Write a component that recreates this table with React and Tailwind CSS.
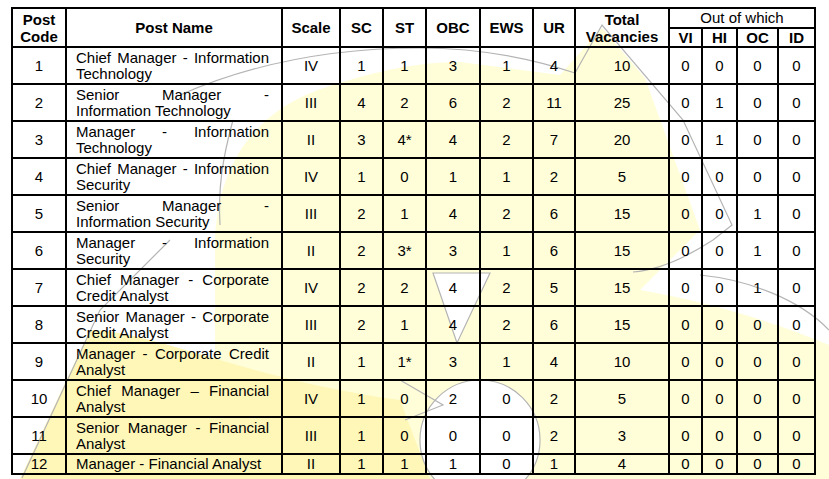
import React from 'react';

const rows = [
  ['1', 'Chief Manager - Information Technology', 'IV', '1', '1', '3', '1', '4', '10', '0', '0', '0', '0'],
  ['2', 'Senior Manager - Information Technology', 'III', '4', '2', '6', '2', '11', '25', '0', '1', '0', '0'],
  ['3', 'Manager - Information Technology', 'II', '3', '4*', '4', '2', '7', '20', '0', '1', '0', '0'],
  ['4', 'Chief Manager - Information Security', 'IV', '1', '0', '1', '1', '2', '5', '0', '0', '0', '0'],
  ['5', 'Senior Manager - Information Security', 'III', '2', '1', '4', '2', '6', '15', '0', '0', '1', '0'],
  ['6', 'Manager - Information Security', 'II', '2', '3*', '3', '1', '6', '15', '0', '0', '1', '0'],
  ['7', 'Chief Manager - Corporate Credit Analyst', 'IV', '2', '2', '4', '2', '5', '15', '0', '0', '1', '0'],
  ['8', 'Senior Manager - Corporate Credit Analyst', 'III', '2', '1', '4', '2', '6', '15', '0', '0', '0', '0'],
  ['9', 'Manager - Corporate Credit Analyst', 'II', '1', '1*', '3', '1', '4', '10', '0', '0', '0', '0'],
  ['10', 'Chief Manager – Financial Analyst', 'IV', '1', '0', '2', '0', '2', '5', '0', '0', '0', '0'],
  ['11', 'Senior Manager - Financial Analyst', 'III', '1', '0', '0', '0', '2', '3', '0', '0', '0', '0'],
  ['12', 'Manager - Financial Analyst', 'II', '1', '1', '1', '0', '1', '4', '0', '0', '0', '0'],
];

const widths = [54, 216, 58, 43, 43, 54, 53, 42, 94, 33, 35, 41, 37];

// faint logo printed behind the table
const Watermark = () => (
  <svg className="absolute inset-0" width="829" height="479" viewBox="0 0 829 479">
    <path
      d="M215 479 L215 240 C218 170 250 110 330 86 C380 70 420 62 460 62 L560 75 L602 28 L645 78 L700 230 L640 290 C700 300 770 320 829 345 L829 479 Z"
      fill="#fffed8"
    />
    <path d="M20 479 L90 330 C150 330 250 380 400 400 L430 479 Z" fill="#fff7b8" />
    <circle cx="480" cy="440" r="60" fill="#ffffff" stroke="#b4b4b4" strokeWidth="1.2" />
    <path d="M433 273 L490 273 L457 343 Z" fill="#ffffff" stroke="#b4b4b4" strokeWidth="1.2" />
    <g fill="none" stroke="#b4b4b4" strokeWidth="1.2">
      <path d="M180 95 C260 60 340 48 420 48 C480 48 530 58 575 73 L602 25 L683 120 L732 225 L713 240 C690 255 660 270 633 272" />
      <path d="M700 275 C750 280 800 300 829 330" />
      <path d="M22 478 L100 310 L170 240" />
      <path d="M233 120 C222 160 218 190 220 225" />
      <path d="M400 380 L443 405 L405 420" />
    </g>
  </svg>
);

export default function App() {
  const cell = 'border-2 border-black text-center align-middle p-0';
  const head = 'border-2 border-black text-center align-middle p-0 font-bold';
  return (
    <div
      className="relative w-[829px] h-[479px] overflow-hidden bg-white text-black"
      style={{ fontFamily: '"Liberation Sans", Arial, sans-serif' }}
    >
      <Watermark />
      <table className="relative ml-[11px] mt-[7px] border-collapse table-fixed w-[805px] text-[15px] leading-[16px]">
        <colgroup>
          {widths.map((w, i) => (
            <col key={i} style={{ width: w }} />
          ))}
        </colgroup>
        <thead>
          <tr className="h-[20px]">
            <th rowSpan={2} className={`${head} leading-[17px]`}>Post<br />Code</th>
            <th rowSpan={2} className={head}>Post Name</th>
            <th rowSpan={2} className={head}>Scale</th>
            <th rowSpan={2} className={head}>SC</th>
            <th rowSpan={2} className={head}>ST</th>
            <th rowSpan={2} className={head}>OBC</th>
            <th rowSpan={2} className={head}>EWS</th>
            <th rowSpan={2} className={head}>UR</th>
            <th rowSpan={2} className={`${head} leading-[17px]`}>Total<br />Vacancies</th>
            <th colSpan={4} className={`${cell} font-normal`}>Out of which</th>
          </tr>
          <tr className="h-[19px]">
            <th className={head}>VI</th>
            <th className={head}>HI</th>
            <th className={head}>OC</th>
            <th className={head}>ID</th>
          </tr>
        </thead>
        <tbody>
          {rows.map((r, i) => (
            <tr key={r[0]} className={i === rows.length - 1 ? 'h-[20px]' : 'h-[37px]'}>
              <td className={cell}>{r[0]}</td>
              <td className="border-2 border-black align-middle text-justify pl-[9px] pr-[12px] py-0">{r[1]}</td>
              {r.slice(2).map((v, j) => (
                <td key={j} className={cell}>{v}</td>
              ))}
            </tr>
          ))}
        </tbody>
      </table>
    </div>
  );
}
